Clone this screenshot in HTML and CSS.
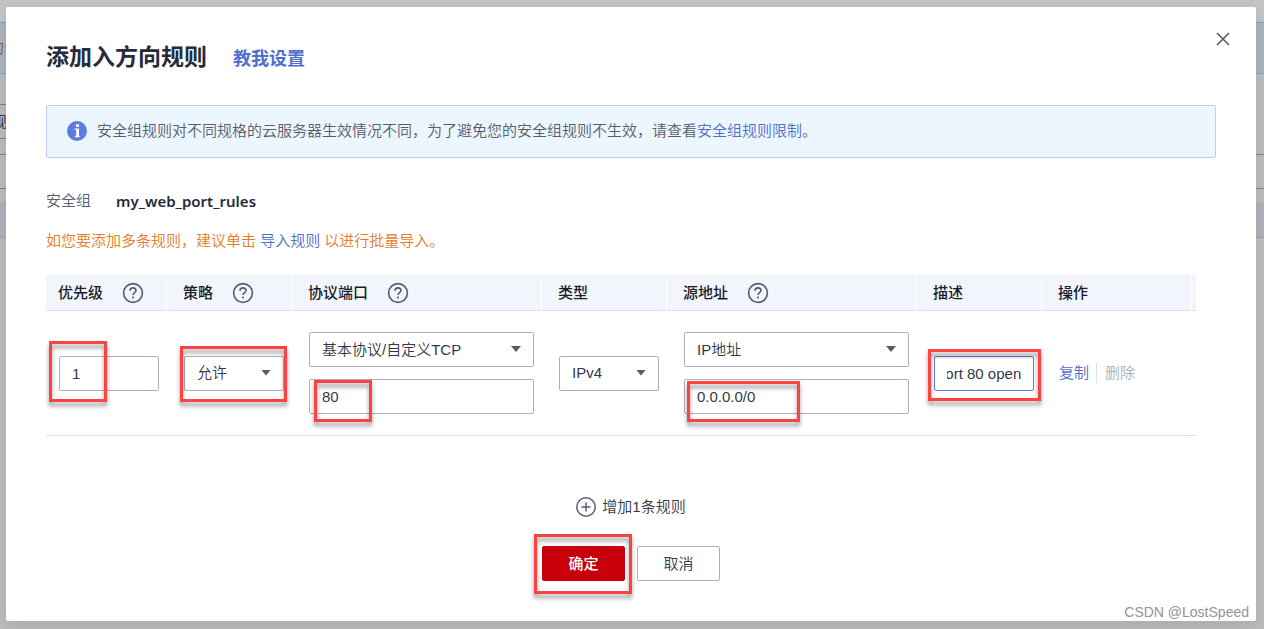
FILE: index.html
```html
<!DOCTYPE html>
<html lang="zh-CN">
<head>
<meta charset="utf-8">
<meta name="viewport" content="width=device-width, initial-scale=1">
<title>添加入方向规则</title>
<link rel="stylesheet" href="styles.css">
</head>
<body>
<svg class="sprite" aria-hidden="true">
  <symbol id="help" viewBox="0 0 22 22">
    <circle cx="11" cy="11" r="9.4" fill="none" stroke="currentColor" stroke-width="1.6"/>
    <path d="M8 8.8C8 7 9.2 5.9 11 5.9s3 1.1 3 2.7c0 2-3 2.3-3 4.5" fill="none" stroke="currentColor" stroke-width="1.6"/>
    <rect x="10.1" y="14.6" width="1.8" height="1.8" fill="currentColor"/>
  </symbol>
</svg>

<div class="backdrop" aria-hidden="true">
  <div class="bg-top"></div>
  <div class="bg-notice">的云</div>
  <div class="bg-gap"></div>
  <div class="bg-tab">规</div>
  <div class="bg-gap-small"></div>
  <div class="bg-toolbar"></div>
  <div class="bg-head"></div>
</div>

<main class="dialog" role="dialog" aria-labelledby="dialog-title">
  <button class="close" type="button" aria-label="关闭">
    <svg viewBox="0 0 14 14" width="14" height="14"><path d="M1 1l12 12M13 1L1 13" stroke="currentColor" stroke-width="1.6" fill="none"/></svg>
  </button>

  <header class="dialog-header">
    <h1 class="title" id="dialog-title">添加入方向规则</h1>
    <a class="guide link" href="#">教我设置</a>
  </header>

  <div class="notice">
    <svg class="notice-icon" viewBox="0 0 20 20" width="20" height="20">
      <circle cx="10" cy="10" r="10" fill="#5e7ce0"/>
      <rect x="9" y="3.2" width="3" height="2.8" fill="#fff"/>
      <path d="M7.6 7.4H12v7.4h.6v1.4H8v-1.4h1.2V8.8H7.6z" fill="#fff"/>
    </svg>
    <p class="notice-text">安全组规则对不同规格的云服务器生效情况不同，为了避免您的安全组规则不生效，请查看<a class="link" href="#">安全组规则限制</a>。</p>
  </div>

  <dl class="group">
    <dt>安全组</dt>
    <dd class="group-name">my_web_port_rules</dd>
  </dl>

  <p class="tip">如您要添加多条规则，建议单击 <a class="link" href="#">导入规则</a> 以进行批量导入。</p>

  <table class="rules">
    <colgroup>
      <col class="col-first"><col class="col-narrow"><col class="col-wide"><col class="col-narrow">
      <col class="col-wide"><col class="col-narrow"><col class="col-action"><col class="col-end">
    </colgroup>
    <thead>
      <tr>
        <th scope="col"><div class="th">优先级<svg class="help"><use href="#help"/></svg></div></th>
        <th scope="col"><div class="th">策略<svg class="help"><use href="#help"/></svg></div></th>
        <th scope="col"><div class="th">协议端口<svg class="help"><use href="#help"/></svg></div></th>
        <th scope="col"><div class="th">类型</div></th>
        <th scope="col"><div class="th">源地址<svg class="help"><use href="#help"/></svg></div></th>
        <th scope="col"><div class="th">描述</div></th>
        <th scope="col"><div class="th">操作</div></th>
        <td></td>
      </tr>
    </thead>
    <tbody>
      <tr>
        <td>
          <div class="field"><input class="control" type="text" aria-label="优先级" value="1"><span class="mark mark-priority"></span></div>
        </td>
        <td>
          <div class="field select"><select class="control" aria-label="策略"><option>允许</option><option>拒绝</option></select><span class="mark mark-policy"></span></div>
        </td>
        <td>
          <div class="stack">
            <div class="field select"><select class="control" aria-label="协议"><option>基本协议/自定义TCP</option></select></div>
            <div class="field"><input class="control" type="text" aria-label="端口" value="80"><span class="mark mark-port"></span></div>
          </div>
        </td>
        <td>
          <div class="field select"><select class="control" aria-label="类型"><option>IPv4</option><option>IPv6</option></select></div>
        </td>
        <td>
          <div class="stack">
            <div class="field select"><select class="control" aria-label="源地址类型"><option>IP地址</option></select></div>
            <div class="field"><input class="control" type="text" aria-label="源地址" value="0.0.0.0/0"><span class="mark mark-source"></span></div>
          </div>
        </td>
        <td>
          <div class="field"><input class="control active" id="description" type="text" aria-label="描述" value="port 80 open"><span class="mark mark-description"></span></div>
        </td>
        <td>
          <div class="actions">
            <button class="text-button link" type="button">复制</button>
            <button class="text-button" type="button" disabled>删除</button>
          </div>
        </td>
        <td></td>
      </tr>
    </tbody>
  </table>

  <button class="add" type="button">
    <svg viewBox="0 0 20 20" width="20" height="20"><g fill="none" stroke="currentColor" stroke-width="1.5"><circle cx="10" cy="10" r="9.2"/><path d="M10 5.5v9M5.5 10h9"/></g></svg>
    增加1条规则
  </button>

  <footer class="footer">
    <div class="field"><button class="button primary" type="button">确定</button><span class="mark mark-confirm"></span></div>
    <button class="button" type="button">取消</button>
  </footer>
</main>

<div class="watermark">CSDN @LostSpeed</div>
<script src="main.js"></script>
</body>
</html>
```
FILE: styles.css
```css
* {
  box-sizing: border-box;
}

body {
  position: relative;
  margin: 0;
  padding: 7px 8px 8px 6px;
  background: #bcbcbc;
  color: #343949;
  font: 350 15px/20px "Liberation Sans", "Noto Sans CJK SC", sans-serif;
}

h1, p, dl, dd {
  margin: 0;
}

button, input, select {
  font: inherit;
  color: inherit;
}

button {
  padding: 0;
  border: 0;
  background: none;
}

.link {
  color: #526ecc;
  text-decoration: none;
}

.sprite {
  position: absolute;
  width: 0;
  height: 0;
}

/* Dimmed page behind the dialog */
.backdrop {
  position: absolute;
  inset: 0;
  overflow: hidden;
  background: #bcbcbc;
}

.bg-top {
  height: 22px;
  background: #c4c4c4;
}

.bg-notice {
  height: 52px;
  border: solid #8c9cc8;
  border-width: 1px 0;
  background: #aab5bd;
  line-height: 50px;
  text-indent: -11px;
  color: #8a5a30;
}

.bg-gap {
  height: 30px;
}

.bg-tab {
  width: 6px;
  height: 35px;
  border: solid #858585;
  border-width: 1px 0;
  line-height: 33px;
  text-indent: -8px;
  overflow: hidden;
}

.bg-gap-small {
  height: 15px;
}

.bg-toolbar {
  height: 35px;
  margin-bottom: 13px;
  border: solid #858589;
  border-width: 1px 0;
}

.bg-head {
  height: 36px;
  border-bottom: 1px solid #a0a0aa;
  background: #b1b2b9;
}

.dialog {
  position: relative;
  padding: 35px 40px 40px;
  border-radius: 2px;
  background: #fff;
  box-shadow: 0 4px 16px rgba(0, 0, 0, 0.1);
}

.close {
  position: absolute;
  top: 25px;
  right: 26px;
  display: flex;
  color: #575d6c;
}

.dialog-header {
  display: flex;
  align-items: center;
  gap: 26px;
  height: 30px;
}

.title {
  color: #252b3a;
  font-size: 23px;
  line-height: 30px;
  font-weight: 700;
}

.guide {
  padding-top: 3px;
  font-size: 18px;
  font-weight: 700;
}

.notice {
  display: flex;
  align-items: center;
  gap: 10px;
  margin-top: 33px;
  padding: 15px 20px 16px;
  border: 1px solid #beccfa;
  border-radius: 2px;
  background: #ebf6ff;
  color: #575d6c;
}

.notice-icon {
  flex: none;
}

.group {
  display: flex;
  gap: 25px;
  margin-top: 33px;
}

.group dt {
  color: #575d6c;
}

.group-name {
  color: #252b3a;
  font-family: "Noto Sans", sans-serif;
  font-weight: 600;
}

.tip {
  margin-top: 20px;
  color: #e37d29;
}

.rules {
  width: calc(100% - 20px);
  margin-top: 24px;
  table-layout: fixed;
  border-collapse: separate;
  border-spacing: 0;
}

.col-first { width: 121px; }
.col-narrow { width: 125px; }
.col-wide { width: 250px; }
.col-action { width: 150px; }
.col-end { width: 4px; }

.rules thead th,
.rules thead td {
  padding: 0 0 0 16px;
  border-right: 1px solid #fff;
  border-bottom: 1px solid #dfe1e6;
  background: #f2f5fc;
  color: #191d28;
  text-align: left;
  font-weight: 500;
}

.rules thead th:first-child {
  padding-left: 12px;
  border-top-left-radius: 2px;
}

.rules thead td {
  padding: 0;
  border-right: 0;
  border-top-right-radius: 2px;
}

.th {
  display: flex;
  align-items: center;
  gap: 19px;
  height: 35px;
}

.help {
  width: 22px;
  height: 22px;
  color: #575d6c;
}

.rules tbody td {
  padding: 21px 8px 21px 17px;
  border-bottom: 1px solid #dfe1e6;
  vertical-align: middle;
}

.rules tbody td:first-child {
  padding-left: 13px;
}

.rules tbody td:last-child {
  padding: 0;
}

.stack {
  display: grid;
  gap: 12px;
}

.field {
  position: relative;
}

.control {
  display: block;
  width: 100%;
  height: 35px;
  padding: 0 12px;
  border: 1px solid #adb0b8;
  border-radius: 2px;
  outline: 0;
  background: #fff;
  appearance: none;
}

.control.active {
  border-color: #5e7ce0;
}

.select::after {
  content: "";
  position: absolute;
  top: 14px;
  right: 13px;
  width: 10px;
  height: 6px;
  background: #575d6c;
  clip-path: polygon(0 0, 100% 0, 50% 100%);
  pointer-events: none;
}

.actions {
  display: flex;
}

.text-button + .text-button {
  margin-left: 7px;
  padding-left: 8px;
  border-left: 1px solid #dfe1e6;
}

.text-button:disabled {
  color: #adb0b8;
}

.add {
  display: flex;
  align-items: center;
  gap: 6px;
  margin: 61px auto 0;
}

.add svg {
  color: #575d6c;
}

.footer {
  display: flex;
  justify-content: center;
  gap: 12px;
  margin-top: 29px;
}

.button {
  width: 83px;
  height: 35px;
  border: 1px solid #adb0b8;
  border-radius: 2px;
  background: #fff;
}

.primary {
  border-color: #c7000b;
  background: #c7000b;
  color: #fff;
  font-weight: 500;
}

/* Red annotation frames laid over the controls */
.mark {
  position: absolute;
  z-index: 1;
  border: 3px solid #fc4343;
  filter: drop-shadow(0 4px 2px rgba(0, 0, 0, 0.4));
  pointer-events: none;
}

.mark-priority { left: -10px; top: -15px; width: 58px; height: 61px; }
.mark-policy { left: -4px; top: -10px; width: 107px; height: 56px; }
.mark-port { left: 5px; top: 1px; width: 58px; height: 42px; }
.mark-source { left: 3px; top: 2px; width: 113px; height: 41px; }
.mark-description { left: -6px; top: -7px; width: 113px; height: 52px; }
.mark-confirm { left: -8px; top: -12px; width: 98px; height: 60px; }

.watermark {
  position: absolute;
  right: 15px;
  bottom: 8px;
  color: #949494;
  font-size: 14px;
  line-height: 18px;
}
```
FILE: main.js
```js
// Keep the end of a long description in view.
const description = document.getElementById("description");
description.scrollLeft = description.scrollWidth;
```
